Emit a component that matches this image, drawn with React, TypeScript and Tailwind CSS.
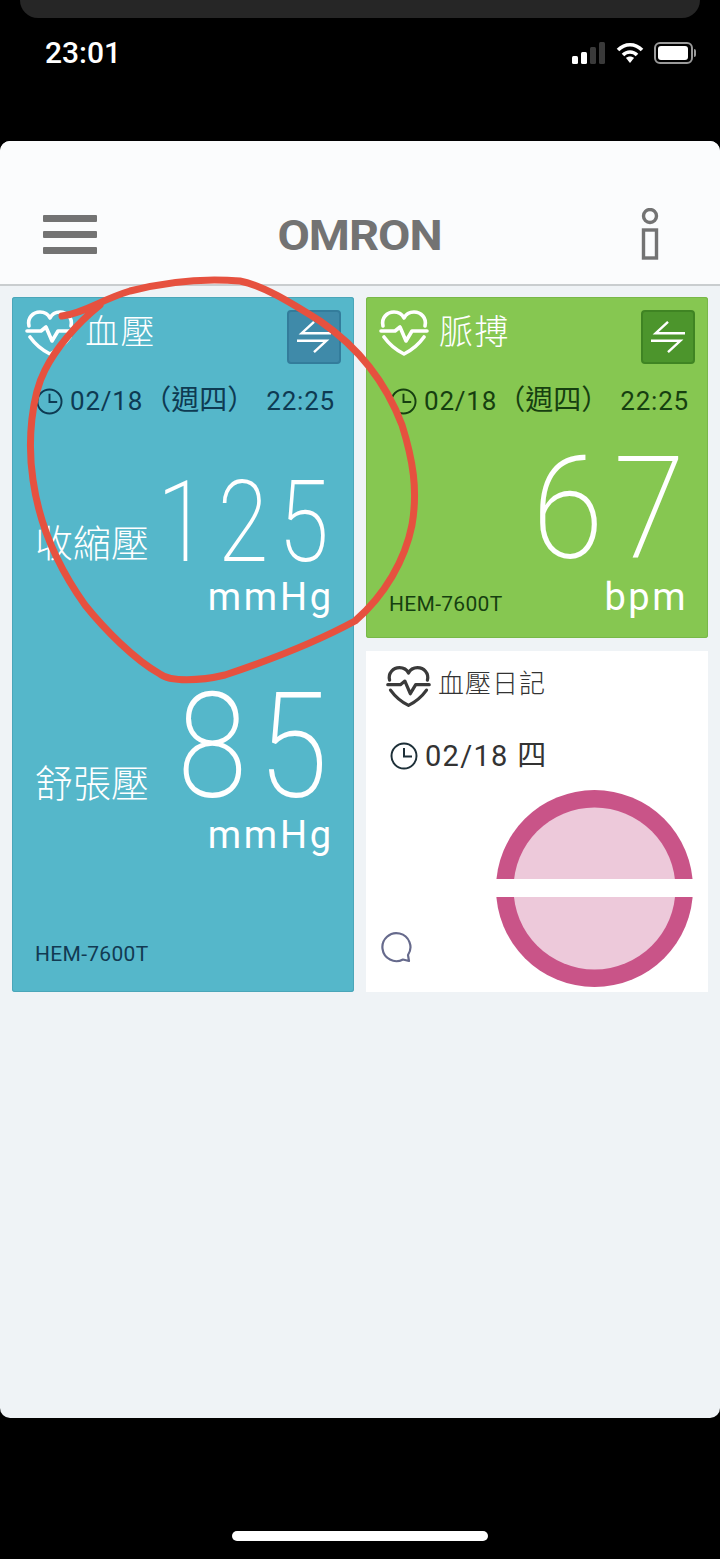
const cjk = "font-['Roboto','Noto_Sans_CJK_TC',sans-serif]";

function HeartIcon({ className }: { className: string }) {
  return (
    <svg viewBox="0 0 50 46" className={className} fill="none" stroke="currentColor" strokeWidth="3.6" strokeLinecap="round" strokeLinejoin="round">
      <path d="M4 16C2 8 8 2 15 2c4 0 8 2 10 6 2-4 6-6 10-6 7 0 13 6 11 14" />
      <path d="M2 21h14l5-4 6 14 6-10h15" />
      <path d="M5 27c5 7 12 13 20 17 8-4 15-10 20-17" />
    </svg>
  );
}

function ClockIcon({ className }: { className: string }) {
  return (
    <svg viewBox="0 0 28 28" className={className} fill="none" stroke="currentColor" strokeWidth="2">
      <circle cx="14" cy="14" r="12.5" />
      <path d="M14 6v8.5h8" />
    </svg>
  );
}

function SwitchButton({ className }: { className: string }) {
  return (
    <div className={`w-[54px] h-[54px] rounded-[4px] border-2 flex items-center justify-center text-white ${className}`}>
      <svg viewBox="0 0 40 36" className="w-[38px] h-[34px]" fill="none" stroke="currentColor" strokeWidth="2.6">
        <path d="M20 2L7 14h31" />
        <path d="M2 22h31L20 34" />
      </svg>
    </div>
  );
}

function CardHead({ title }: { title: string }) {
  return (
    <div className="flex items-start justify-between pl-[13px] pr-[13px] pt-[13px]">
      <div className="flex items-center gap-[10px] text-white">
        <HeartIcon className="w-[50px] h-[46px]" />
        <span className="text-[34px] leading-[40px] font-light tracking-[1.5px] -mt-[3px]">{title}</span>
      </div>
    </div>
  );
}

function DateRow({ color }: { color: string }) {
  return (
    <div className={`flex items-center justify-between pl-[24px] pr-[19px] text-[26px] leading-[32px] tracking-[0.8px] ${color}`}>
      <div className="flex items-center gap-[7px]">
        <ClockIcon className="w-[27px] h-[27px]" />
        <span className="whitespace-nowrap">02/18<span className="text-[28px] tracking-[0px]">（週四）</span></span>
      </div>
      <span>22:25</span>
    </div>
  );
}

function Reading({ label, value, size, pt, labelPt, unitMt }: { label: string; value: string; size: string; pt: string; labelPt: string; unitMt: string }) {
  return (
    <div className={`flex flex-col items-end pr-[20px] text-white ${pt}`}>
      <div className="w-full flex items-start justify-between pl-[23px]">
        <span className={`text-[38px] leading-[44px] font-light whitespace-nowrap ${labelPt}`}>{label}</span>
        <span className={`font-extralight ${size}`}>{value}</span>
      </div>
      <span className={`text-[38px] leading-[44px] tracking-[2.8px] ${unitMt}`}>mmHg</span>
    </div>
  );
}

export default function App() {
  return (
    <div className={`relative w-[720px] h-[1559px] bg-black flex flex-col overflow-hidden ${cjk}`}>
      <div className="mx-[20px] h-[18px] bg-[#262626] rounded-b-[20px] shrink-0" />

      {/* status bar */}
      <div className="flex items-center justify-between pl-[45px] pr-[24px] h-[70px] text-white shrink-0">
        <span className="text-[30px] leading-[34px] font-medium">23:01</span>
        <div className="flex items-center gap-[10px]">
          <svg viewBox="0 0 34 22" className="w-[34px] h-[22px]">
            <rect x="0" y="14" width="6" height="8" rx="1.5" fill="#fff" />
            <rect x="9" y="10" width="6" height="12" rx="1.5" fill="#fff" />
            <rect x="18" y="5" width="6" height="17" rx="1.5" fill="#3a3a3a" />
            <rect x="27" y="0" width="6" height="22" rx="1.5" fill="#3a3a3a" />
          </svg>
          <svg viewBox="0 0 28 22" className="w-[28px] h-[22px]" fill="none" stroke="#fff" strokeWidth="3.6">
            <path d="M2 8c7-7 17-7 24 0" />
            <path d="M7 13c4-4 10-4 14 0" />
            <path d="M10 16l4 5 4-5c-2-2-6-2-8 0z" fill="#fff" stroke="none" />
          </svg>
          <div className="flex items-center">
            <div className="w-[39px] h-[22px] rounded-[6px] border-2 border-[#9a9a9a] p-[2px]">
              <div className="w-[30px] h-full bg-white rounded-[3px]" />
            </div>
            <div className="w-[2px] h-[8px] bg-[#9a9a9a] rounded-r ml-[1px]" />
          </div>
        </div>
      </div>

      <div className="h-[53px] shrink-0" />

      {/* app window */}
      <div className="h-[1277px] shrink-0 rounded-[10px] bg-[#eff3f6] flex flex-col overflow-hidden">
        <div className="h-[145px] shrink-0 bg-[#fbfcfd] border-b-2 border-[#c9cdcf] flex items-end justify-between pl-[43px] pr-[60px] pb-[30px]">
          <div className="flex flex-col gap-[9px]">
            <div className="w-[54px] h-[7px] bg-[#737373] rounded-[1px]" />
            <div className="w-[54px] h-[7px] bg-[#737373] rounded-[1px]" />
            <div className="w-[54px] h-[7px] bg-[#737373] rounded-[1px]" />
          </div>
          <span className="text-[47px] leading-[40px] font-bold text-[#737373] -tracking-[1px] scale-y-[0.915] -ml-[18px] -mb-[1px]">OMRON</span>
          <svg viewBox="0 0 20 52" className="w-[20px] h-[52px] -mb-[6px]" fill="none" stroke="#737373" strokeWidth="3.4">
            <circle cx="10" cy="8" r="6.5" />
            <rect x="3.5" y="22" width="13" height="28" />
          </svg>
        </div>

        <div className="grid grid-cols-2 gap-x-[12px] px-[12px] pt-[11px]">
          {/* blood pressure */}
          <div className="relative h-[695px] bg-[#55b7ca] rounded-[3px] shadow-[inset_0_0_0_1px_#4aa6b9] flex flex-col">
            <CardHead title="血壓" />
            <div className="absolute top-[13px] right-[13px]">
              <SwitchButton className="bg-[#3f8aa9] border-[#337c9b]" />
            </div>
            <div className="mt-[29px]">
              <DateRow color="text-[#0e3a52]" />
            </div>
            <Reading label="收縮壓" value="125" size="text-[92px] leading-[100px] tracking-[10px] scale-y-[1.22] -mr-[5px]" pt="pt-[56px]" labelPt="pt-[49px]" unitMt="mt-[2px]" />
            <Reading label="舒張壓" value="85" size="text-[127px] leading-[130px] tracking-[11px] scale-y-[1.15] -mr-[5px]" pt="pt-[64px]" labelPt="pt-[79px]" unitMt="-mt-[0px]" />
            <span className="mt-auto mb-[25px] ml-[23px] text-[21px] leading-[26px] tracking-[0.3px] text-[#123a52]">HEM-7600T</span>
          </div>

          <div className="flex flex-col gap-[13px]">
            {/* pulse */}
            <div className="relative h-[341px] bg-[#86c751] rounded-[3px] shadow-[inset_0_0_0_1px_#78b848] flex flex-col">
              <CardHead title="脈搏" />
              <div className="absolute top-[13px] right-[13px]">
                <SwitchButton className="bg-[#4c952c] border-[#3f8423]" />
              </div>
              <div className="mt-[29px]">
                <DateRow color="text-[#163f10]" />
              </div>
              <div className="flex justify-end pr-[13px] pt-[28px]">
                <span className="text-[130px] leading-[130px] font-extralight tracking-[10px] scale-y-[1.1] text-white">67</span>
              </div>
              <div className="flex items-end justify-between pl-[23px] pr-[20px]">
                <span className="text-[21px] leading-[26px] tracking-[0.3px] text-[#163f10] mb-[2px]">HEM-7600T</span>
                <span className="text-[38px] leading-[44px] tracking-[2.5px] text-white">bpm</span>
              </div>
            </div>

            {/* diary */}
            <div className="h-[341px] bg-white flex flex-col relative">
              <div className="flex items-center gap-[7px] pl-[20px] pt-[14px]">
                <HeartIcon className="w-[45px] h-[43px] text-[#3a3a3a]" />
                <span className="text-[26px] leading-[34px] tracking-[1px] font-light text-[#333] -mt-[6px]">血壓日記</span>
              </div>
              <div className="flex items-center gap-[7px] pl-[24px] pt-[30px] text-[29px] leading-[36px] tracking-[1.3px] text-[#333]">
                <ClockIcon className="w-[28px] h-[28px] text-[#1d2f38]" />
                <span>02/18 四</span>
              </div>
              <div className="flex items-end justify-between pl-[14px] pr-[15px] mt-[16px]">
                <svg viewBox="0 0 32 32" className="w-[32px] h-[32px] mb-[24px]" fill="none" stroke="#666a8c" strokeWidth="2.2" strokeLinejoin="round">
                  <path d="M29 30l-1-6a14 14 0 1 0-5 4.5z" />
                </svg>
                <svg viewBox="0 0 197 197" className="w-[197px] h-[197px]">
                  <circle cx="98.5" cy="98.5" r="98.5" fill="#c95488" />
                  <circle cx="98.5" cy="98.5" r="81" fill="#edc9da" />
                  <rect x="0" y="89" width="197" height="18" fill="#fff" />
                </svg>
              </div>
            </div>
          </div>
        </div>
      </div>

      <div className="flex-1 flex items-end justify-center pb-[18px]">
        <div className="w-[256px] h-[10px] rounded-full bg-white" />
      </div>

      {/* hand drawn marker circle on top of the screenshot */}
      <svg viewBox="0 0 720 1559" className="absolute inset-0 w-[720px] h-[1559px] pointer-events-none" fill="none" stroke="#e6513f" strokeWidth="7" strokeLinecap="round" strokeLinejoin="round">
        <path d="M62 316C85 313 100 300 130 291C165 282 205 278 240 281C262 285 290 302 320 321C355 345 385 380 402 425C413 460 418 490 412 525C405 560 385 595 355 621C320 640 270 660 225 675C200 681 170 682 160 674C135 660 105 630 85 605C60 570 40 530 33 480C27 440 32 395 45 370C55 350 75 325 100 305" />
      </svg>
    </div>
  );
}
